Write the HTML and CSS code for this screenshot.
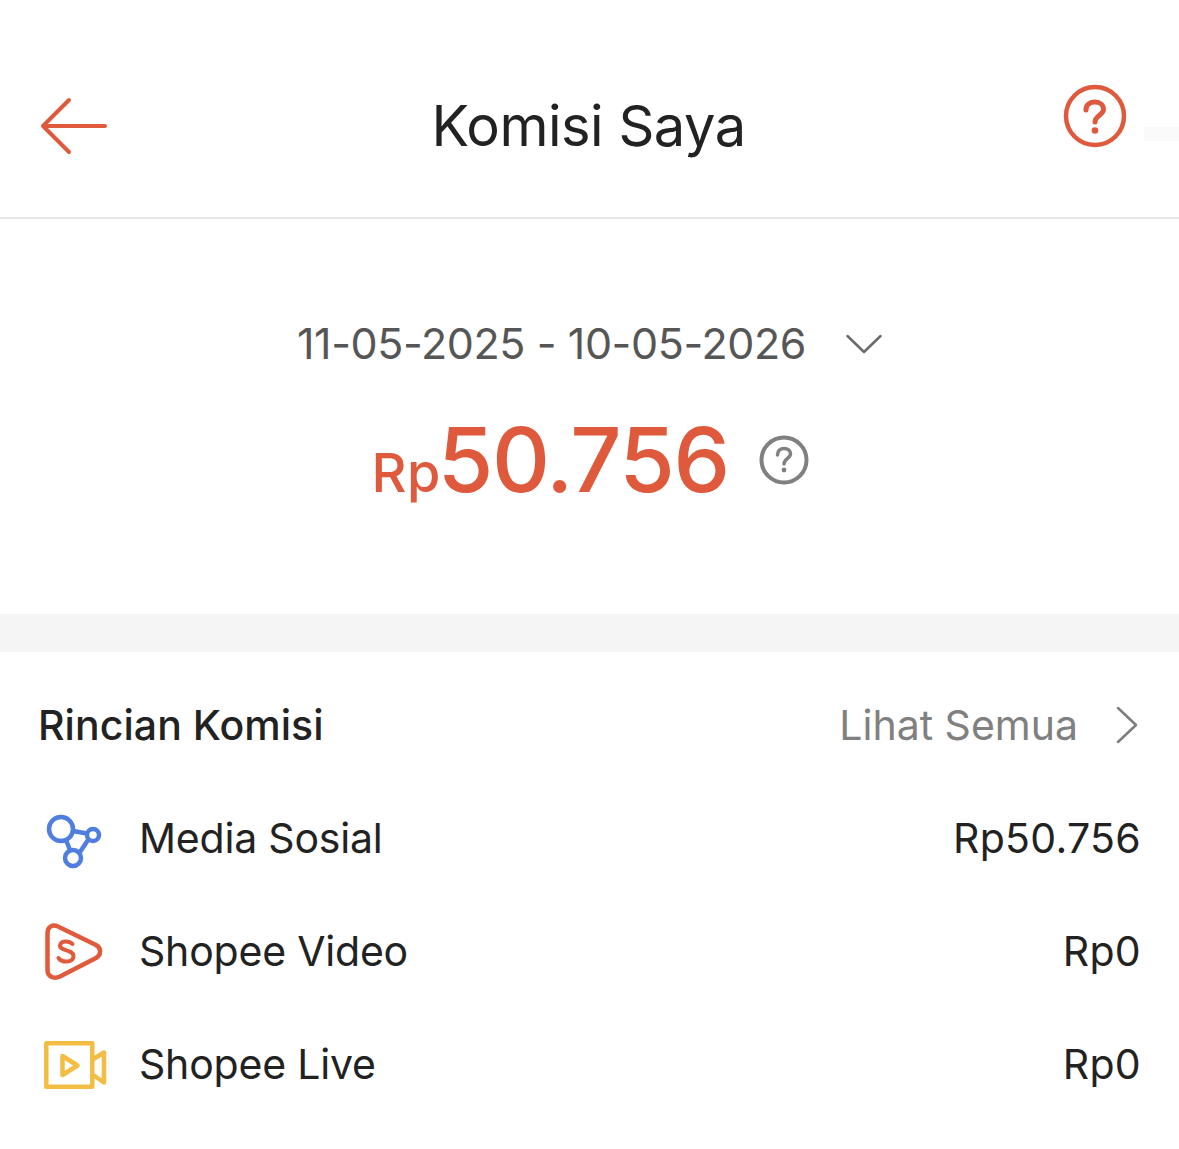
FILE: index.html
```html
<!DOCTYPE html>
<html lang="en">
<head>
    <meta charset="UTF-8">
    <meta name="viewport" content="width=device-width, initial-scale=1.0">
    <title>Komisi Saya</title>
    <link rel="stylesheet" href="styles.css">
</head>
<body>
    <header class="top-bar">
        <svg class="back-icon" width="70" height="60" viewBox="0 0 70 60">
            <path d="M29 3 L3 29 L29 55 M3 29 H65" fill="none" stroke="#df5a3c" stroke-width="4" stroke-linecap="round" stroke-linejoin="round"/>
        </svg>
        <h1 class="title">Komisi Saya</h1>
        <svg class="help-icon" width="64" height="64" viewBox="0 0 64 64">
            <circle cx="32" cy="32" r="29" fill="none" stroke="#df5a3c" stroke-width="4.5"/>
            <path d="M23 26 C23 20.500 27 18 32 18 C37 18 40.500 21 40.500 25.500 C40.500 31 32 31.500 32 38" fill="none" stroke="#df5a3c" stroke-width="5" stroke-linecap="round"/>
            <circle cx="32" cy="46.500" r="3.300" fill="#df5a3c"/>
        </svg>
        <span class="edge-mark"></span>
    </header>

    <section class="summary">
        <div class="date-range">
            <span>11-05-2025 - 10-05-2026</span>
            <svg width="36" height="22" viewBox="0 0 36 22">
                <path d="M1.500 3 L18 19 L34.500 3" fill="none" stroke="#6b6b6b" stroke-width="2.500" stroke-linecap="round" stroke-linejoin="round"/>
            </svg>
        </div>
        <div class="amount">
            <span class="amount-text"><span class="currency">Rp</span><span class="value">50.756</span></span>
            <svg class="amount-help" width="50" height="50" viewBox="0 0 50 50">
                <circle cx="25" cy="25" r="22.500" fill="none" stroke="#808080" stroke-width="4"/>
                <path d="M18.500 20 C18.500 15.500 21.500 13.500 25 13.500 C29 13.500 31.500 16 31.500 19 C31.500 23 25 24 25 29" fill="none" stroke="#808080" stroke-width="3.500" stroke-linecap="round"/>
                <circle cx="25" cy="35" r="2.400" fill="#808080"/>
            </svg>
        </div>
    </section>

    <div class="band"></div>

    <section class="details">
        <div class="details-head">
            <h2>Rincian Komisi</h2>
            <div class="see-all">
                <span>Lihat Semua</span>
                <svg width="24" height="38" viewBox="0 0 24 38">
                    <path d="M3 2 L21 19 L3 36" fill="none" stroke="#7d7d7d" stroke-width="2.500" stroke-linecap="round" stroke-linejoin="round"/>
                </svg>
            </div>
        </div>

        <div class="row">
            <span class="row-icon">
                <svg width="66" height="60" viewBox="0 0 66 60">
                    <g fill="none" stroke="#4f7ee0" stroke-width="4.500">
                        <circle cx="18" cy="20" r="12"/>
                        <circle cx="30" cy="49" r="8"/>
                        <circle cx="50" cy="26" r="6"/>
                        <path d="M30 22 L44 24.500 M45 31 L37 43 M23 31 L27 41"/>
                    </g>
                </svg>
            </span>
            <span class="row-label">Media Sosial</span>
            <span class="row-value">Rp50.756</span>
        </div>

        <div class="row">
            <span class="row-icon">
                <svg width="66" height="60" viewBox="0 0 66 60">
                    <path d="M4.500 11 C4.500 5 9 2 15 4.500 L53 23 C58.500 26 58.500 33 53 36 L17 54.500 C10 57.500 4.500 54.500 4.500 48 Z" fill="none" stroke="#e05a3c" stroke-width="4.500" stroke-linejoin="round"/>
                    <path d="M29.500 22 C27 19 18 17.500 17 23.500 C16.500 29 30 27 30.500 34 C30.500 41 19 41 15.500 36" fill="none" stroke="#e05a3c" stroke-width="4" stroke-linecap="round"/>
                </svg>
            </span>
            <span class="row-label">Shopee Video</span>
            <span class="row-value">Rp0</span>
        </div>

        <div class="row">
            <span class="row-icon">
                <svg width="66" height="60" viewBox="0 0 66 60">
                    <g fill="none" stroke="#f2bd42" stroke-width="4.500" stroke-linejoin="round">
                        <rect x="3.300" y="8.300" width="46" height="43.500"/>
                        <path d="M49.500 24.500 L61 17.500 V47.500 L49.500 39.500"/>
                        <path d="M19.500 21 L34.500 30.500 L19.500 40 Z"/>
                    </g>
                </svg>
            </span>
            <span class="row-label">Shopee Live</span>
            <span class="row-value">Rp0</span>
        </div>
    </section>
</body>
</html>
```

FILE: styles.css
```css
* { margin: 0; padding: 0; box-sizing: border-box; }
body { background: #ffffff; font-family: Inter, Roboto, "Liberation Sans", sans-serif; color: #222222; }

.top-bar {
    position: relative;
    height: 219px;
    border-bottom: 2px solid #e6e6e6;
    display: flex;
    align-items: center;
    justify-content: space-between;
    padding: 37px 52px 0 40px;
}
.title {
    font-size: 56px;
    font-weight: 400;
    line-height: 66px;
    letter-spacing: -0.5px;
    margin-left: 4px;
    padding-bottom: 2px;
}
.help-icon { margin-top: -22px; }
.edge-mark {
    position: absolute;
    right: 0;
    top: 127px;
    width: 35px;
    height: 14px;
    background: #fafafa;
}

.summary {
    height: 395px;
    display: flex;
    flex-direction: column;
    align-items: center;
    padding-top: 97px;
}
.date-range {
    display: flex;
    align-items: center;
    gap: 40px;
    color: #565656;
    font-size: 43px;
    line-height: 54px;
    letter-spacing: -0.4px;
}
.date-range svg { margin-top: 2px; }
.amount {
    display: flex;
    align-items: center;
    margin-top: 38px;
    margin-left: 1px;
    color: #df5a3c;
}
.amount-text { line-height: 104px; }
.currency { font-size: 54px; font-weight: 500; letter-spacing: 0.5px; }
.value { font-size: 90px; font-weight: 500; letter-spacing: -1.5px; margin-left: -3px; }
.amount-help { margin-left: 30px; margin-bottom: 26px; }

.band { height: 38px; background: #f5f5f5; }

.details { padding: 46px 39px 0 38px; }
.details-head {
    display: flex;
    justify-content: space-between;
    align-items: center;
    height: 54px;
    margin-bottom: 30px;
}
.details-head h2 { font-size: 41px; font-weight: 500; letter-spacing: 0.05px; }
.see-all {
    display: flex;
    align-items: center;
    gap: 37px;
    color: #808080;
    font-size: 41px;
}
.see-all svg { margin-right: 1px; }
.row {
    display: flex;
    align-items: center;
    height: 113px;
    font-size: 41px;
}
.row-icon { width: 101px; display: flex; align-items: center; padding-left: 5px; }
.row-label { flex: 1; letter-spacing: -0.2px; padding-bottom: 2px; }
.row-value { text-align: right; letter-spacing: 0.3px; margin-right: -1px; padding-bottom: 2px; }
```
